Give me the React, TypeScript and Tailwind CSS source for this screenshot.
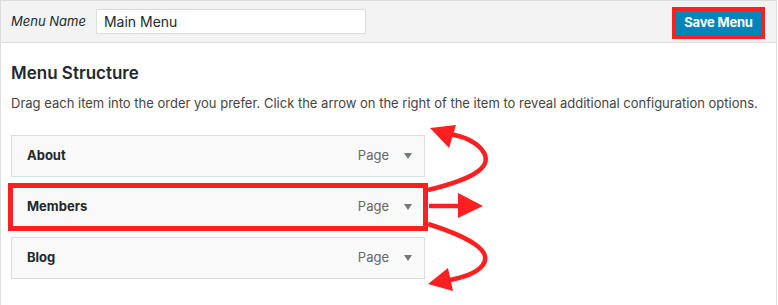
import React from "react";

const items = ["About", "Members", "Blog"];

function Caret() {
  return (
    <svg width="8" height="6" viewBox="0 0 8 6" className="ml-[17px]">
      <path d="M0 0 L8 0 L4 6 Z" fill="#72777c" />
    </svg>
  );
}

export default function App() {
  return (
    <div
      className="relative w-[778px] h-[305px] bg-white overflow-hidden"
      style={{ fontFamily: "Inter, 'Noto Sans', sans-serif" }}
    >
      <div className="w-[777px] h-[305px] border-l border-t border-r border-[#dcdcdc] flex flex-col">
        <div className="h-[42px] bg-[#f3f3f3] border-b border-[#dcdcdc] flex items-center pl-[10px] pr-[10px] shrink-0">
          <span className="text-[13px] italic text-[#23282d]">Menu Name</span>
          <div className="ml-[10px] w-[270px] h-[25px] bg-white border border-[#dcdcdc] flex items-center pl-[7px] text-[14px] text-[#23282d]">
            Main Menu
          </div>
          <div className="ml-auto border-[4px] border-[#fe2020] mt-[2px] mr-[1px]">
            <div className="bg-[#0085ba] text-white font-bold text-[13px] h-[24px] w-[85px] flex items-center justify-center tracking-[-0.2px]">
              Save Menu
            </div>
          </div>
        </div>
        <div className="pl-[10px] pt-[19px]">
          <h2 className="text-[17px] font-semibold text-[#23282d] leading-[22px]">Menu Structure</h2>
          <p className="text-[13px] text-[#444] mt-[9px] leading-[20px]">
            Drag each item into the order you prefer. Click the arrow on the right of the item to reveal additional configuration options.
          </p>
          <div className="mt-[22px] flex flex-col gap-[9px] w-[414px]">
            {items.map((name) => (
              <div
                key={name}
                className={
                  "h-[42px] bg-[#f9f9f9] border border-[#dcdcdc] flex items-center pl-[15px] pr-[12px] " +
                  (name === "Members" ? "outline-[5px] outline-solid outline-[#fe2020] outline-offset-[-2px]" : "")
                }
              >
                <span className="text-[13px] font-bold text-[#23282d]">{name}</span>
                <span className="ml-auto text-[13px] text-[#666] mr-[-2px]">Page</span>
                <Caret />
              </div>
            ))}
          </div>
        </div>
      </div>
      <svg
        className="absolute left-0 top-0 pointer-events-none"
        width="778"
        height="305"
        viewBox="0 0 778 305"
      >
        <g stroke="#fe2020" strokeWidth="4.5" fill="none" strokeLinecap="butt">
          <path d="M428,190 C478,178 494,165 482,150 C476,142 466,137 450,134" />
          <path d="M429,206 L462,206" />
          <path d="M428,224 C472,238 494,252 482,266 C476,273 466,277 450,280" />
        </g>
        <g fill="#fe2020">
          <path d="M430,128 L456,125 L449,148 Z" />
          <path d="M458,193 L458,218 L483,206 Z" />
          <path d="M428,284 L448,268 L453,291 Z" />
        </g>
      </svg>
    </div>
  );
}
